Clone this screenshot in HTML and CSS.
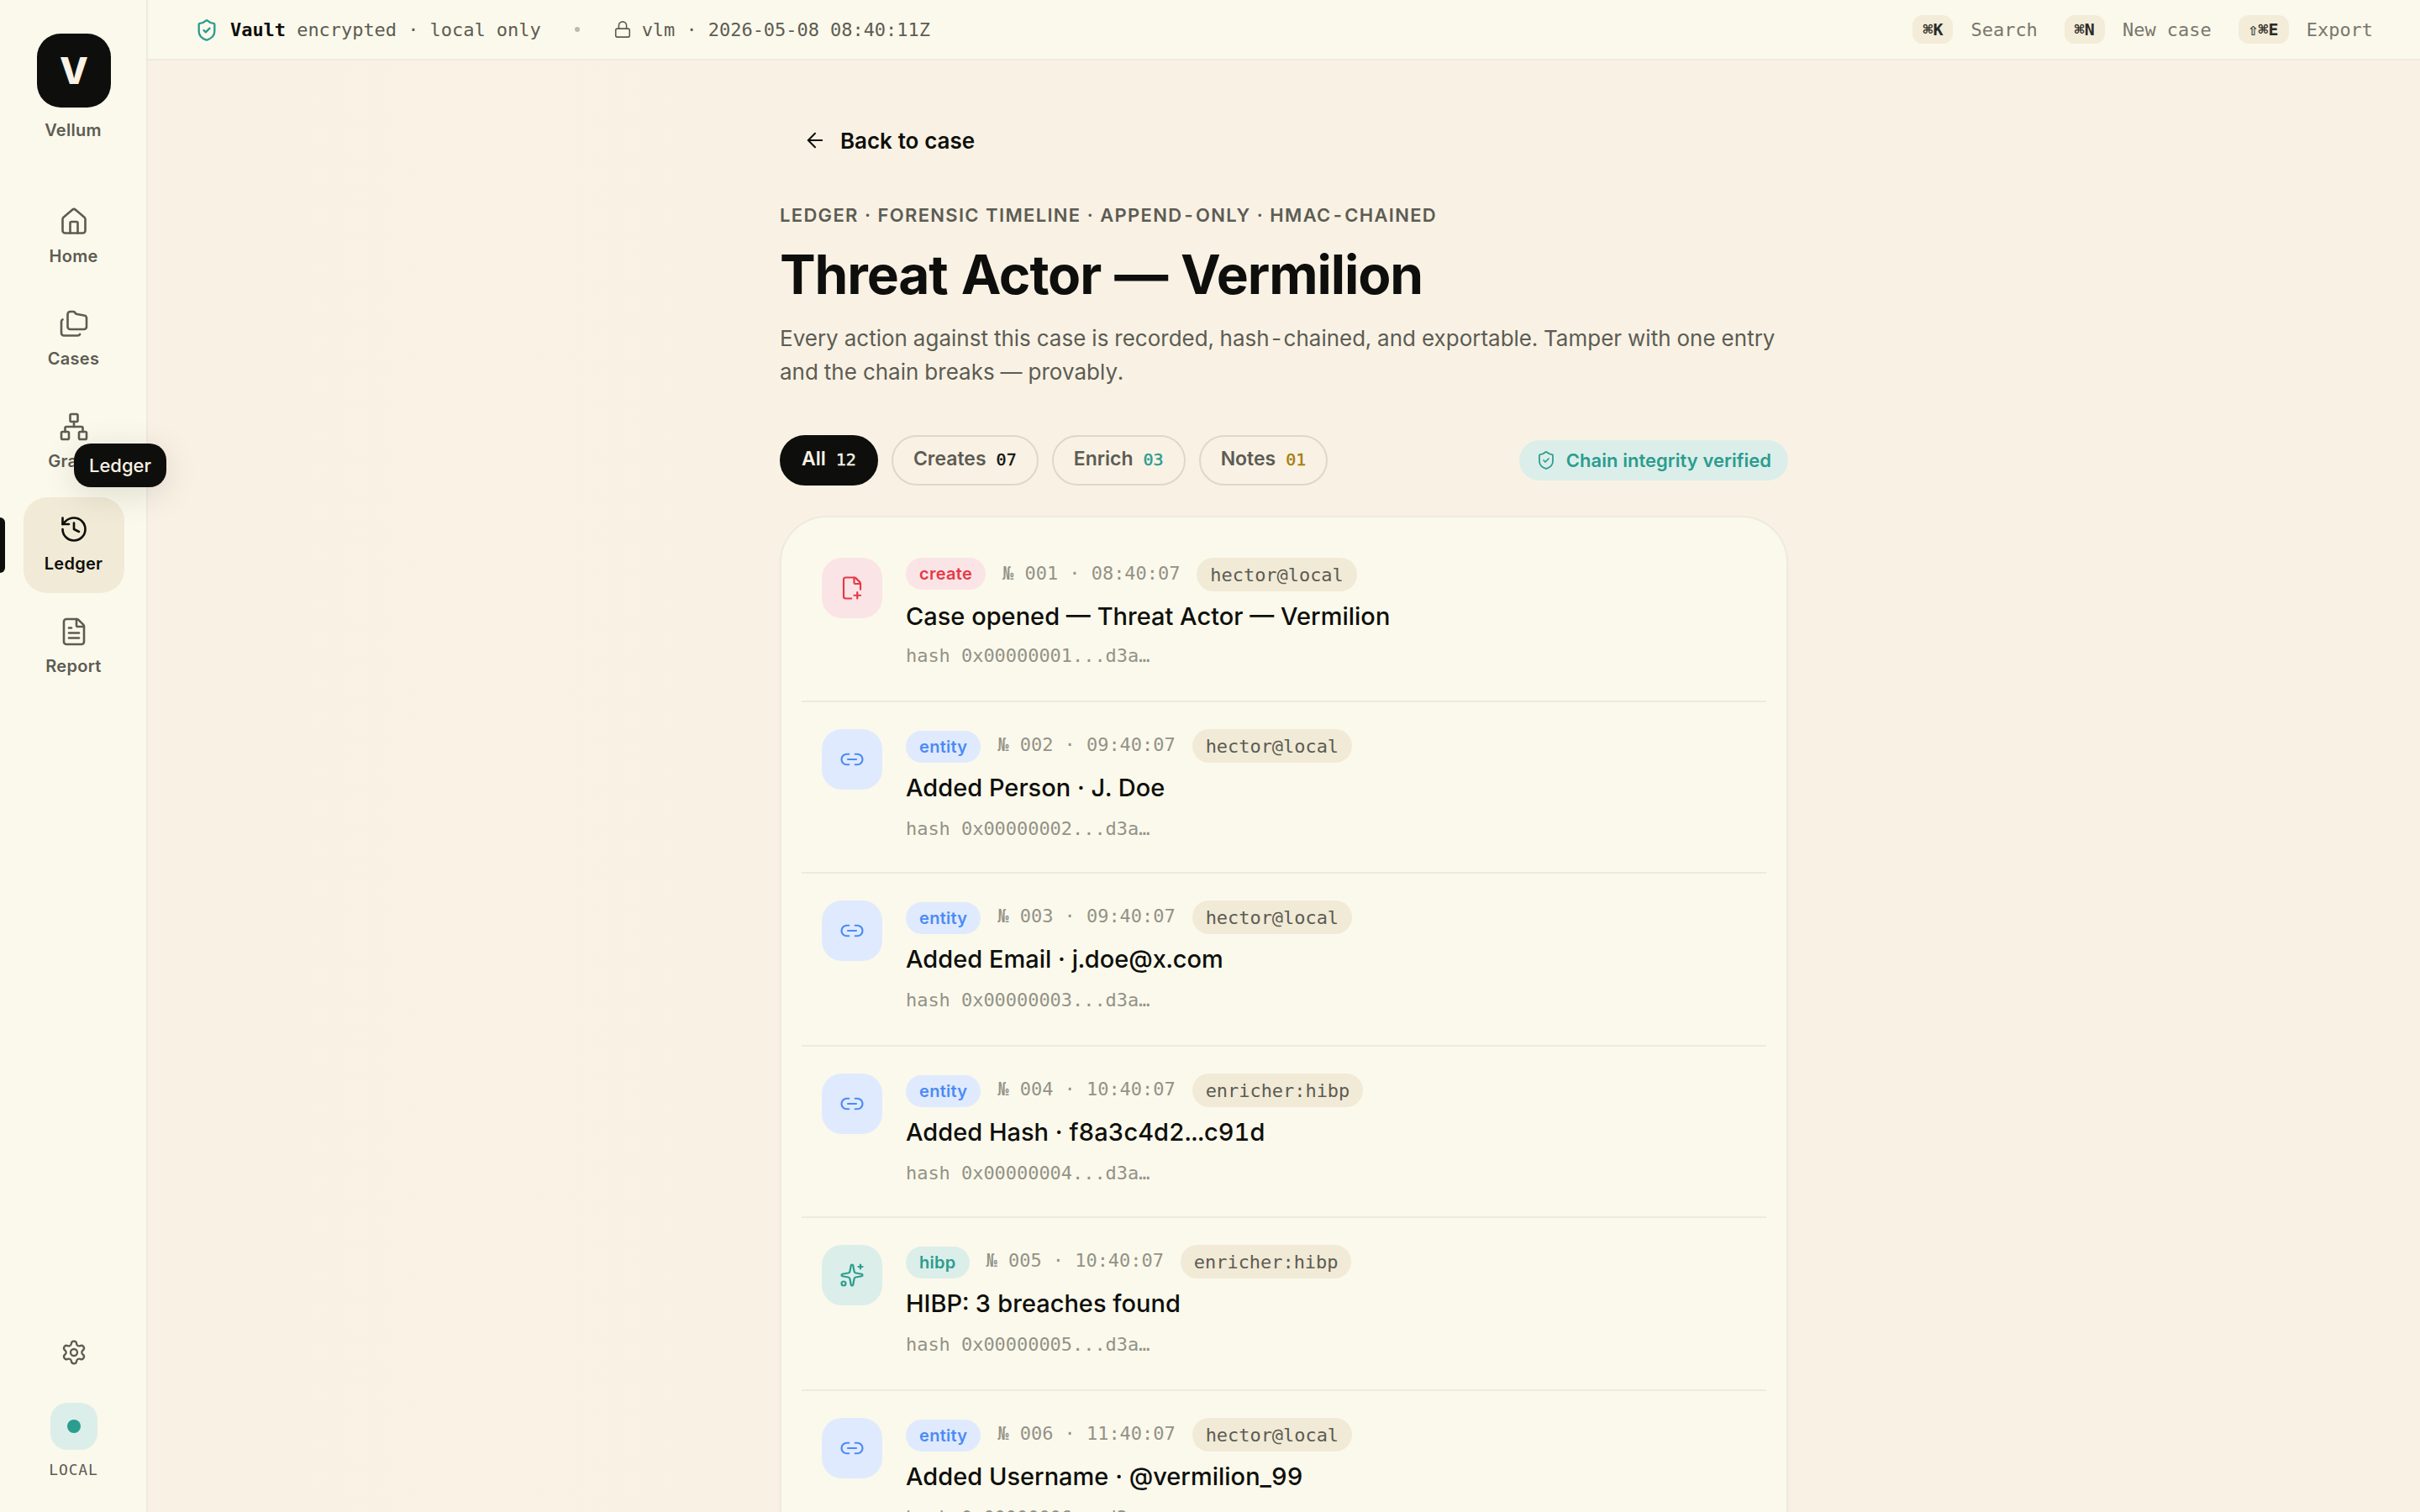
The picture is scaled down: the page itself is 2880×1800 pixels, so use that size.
FILE: index.html
```html
<!DOCTYPE html>
<html lang="en">
<head>
<meta charset="utf-8">
<title>Vellum — Ledger</title>
<link rel="stylesheet" href="styles.css">
</head>
<body>
<svg class="sprite" aria-hidden="true">
  <symbol id="i-home" viewBox="0 0 24 24"><path d="M15 21v-8a1 1 0 0 0-1-1h-4a1 1 0 0 0-1 1v8"/><path d="M3 10a2 2 0 0 1 .709-1.528l7-6a2 2 0 0 1 2.582 0l7 6A2 2 0 0 1 21 10v9a2 2 0 0 1-2 2H5a2 2 0 0 1-2-2z"/></symbol>
  <symbol id="i-folders" viewBox="0 0 24 24"><path d="M20 5a2 2 0 0 1 2 2v7a2 2 0 0 1-2 2H9a2 2 0 0 1-2-2V4a2 2 0 0 1 2-2h2.5a1.5 1.5 0 0 1 1.2.6l.6.8a1.5 1.5 0 0 0 1.2.6z"/><path d="M3 8.268a2 2 0 0 0-1 1.738V19a2 2 0 0 0 2 2h11a2 2 0 0 0 1.732-1"/></symbol>
  <symbol id="i-network" viewBox="0 0 24 24"><rect x="16" y="16" width="6" height="6" rx="1"/><rect x="2" y="16" width="6" height="6" rx="1"/><rect x="9" y="2" width="6" height="6" rx="1"/><path d="M5 16v-3a1 1 0 0 1 1-1h12a1 1 0 0 1 1 1v3"/><path d="M12 12V8"/></symbol>
  <symbol id="i-history" viewBox="0 0 24 24"><path d="M3 12a9 9 0 1 0 9-9 9.75 9.75 0 0 0-6.74 2.74L3 8"/><path d="M3 3v5h5"/><path d="M12 7v5l4 2"/></symbol>
  <symbol id="i-file-text" viewBox="0 0 24 24"><path d="M6 22a2 2 0 0 1-2-2V4a2 2 0 0 1 2-2h8a2.4 2.4 0 0 1 1.704.706l3.588 3.588A2.4 2.4 0 0 1 20 8v12a2 2 0 0 1-2 2z"/><path d="M14 2v5a1 1 0 0 0 1 1h5"/><path d="M10 9H8"/><path d="M16 13H8"/><path d="M16 17H8"/></symbol>
  <symbol id="i-settings" viewBox="0 0 24 24"><path d="M9.671 4.136a2.34 2.34 0 0 1 4.659 0 2.34 2.34 0 0 0 3.319 1.915 2.34 2.34 0 0 1 2.33 4.033 2.34 2.34 0 0 0 0 3.831 2.34 2.34 0 0 1-2.33 4.033 2.34 2.34 0 0 0-3.319 1.915 2.34 2.34 0 0 1-4.659 0 2.34 2.34 0 0 0-3.32-1.915 2.34 2.34 0 0 1-2.33-4.033 2.34 2.34 0 0 0 0-3.831A2.34 2.34 0 0 1 6.35 6.051a2.34 2.34 0 0 0 3.319-1.915"/><circle cx="12" cy="12" r="3"/></symbol>
  <symbol id="i-shield" viewBox="0 0 24 24"><path d="M20 13c0 5-3.5 7.5-7.66 8.95a1 1 0 0 1-.67-.01C7.5 20.5 4 18 4 13V6a1 1 0 0 1 1-1c2 0 4.5-1.2 6.24-2.72a1.17 1.17 0 0 1 1.52 0C14.51 3.81 17 5 19 5a1 1 0 0 1 1 1z"/><path d="m9 12 2 2 4-4"/></symbol>
  <symbol id="i-lock" viewBox="0 0 24 24"><rect x="3" y="11" width="18" height="11" rx="2"/><path d="M7 11V7a5 5 0 0 1 10 0v4"/></symbol>
  <symbol id="i-arrow" viewBox="0 0 24 24"><path d="m12 19-7-7 7-7"/><path d="M19 12H5"/></symbol>
  <symbol id="i-file-plus" viewBox="0 0 24 24"><path d="M11.35 22H6a2 2 0 0 1-2-2V4a2 2 0 0 1 2-2h8a2.4 2.4 0 0 1 1.704.706l3.588 3.588A2.4 2.4 0 0 1 20 8v5.35"/><path d="M14 2v5a1 1 0 0 0 1 1h5"/><path d="M14 19h6"/><path d="M17 16v6"/></symbol>
  <symbol id="i-link" viewBox="0 0 24 24"><path d="M9 17H7A5 5 0 0 1 7 7h2"/><path d="M15 7h2a5 5 0 1 1 0 10h-2"/><path d="M8 12h8"/></symbol>
  <symbol id="i-sparkles" viewBox="0 0 24 24"><path d="M11.017 2.814a1 1 0 0 1 1.966 0l1.051 5.558a2 2 0 0 0 1.594 1.594l5.558 1.051a1 1 0 0 1 0 1.966l-5.558 1.051a2 2 0 0 0-1.594 1.594l-1.051 5.558a1 1 0 0 1-1.966 0l-1.051-5.558a2 2 0 0 0-1.594-1.594l-5.558-1.051a1 1 0 0 1 0-1.966l5.558-1.051a2 2 0 0 0 1.594-1.594z"/><path d="M20 2v4"/><path d="M22 4h-4"/><circle cx="4" cy="20" r="2"/></symbol>
</svg>

<div class="app">
  <aside class="sidebar">
    <div class="brand">
      <div class="logo">V</div>
      <span class="brand-name">Vellum</span>
    </div>
    <nav class="nav">
      <a class="nav-item"><svg class="icon"><use href="#i-home"/></svg><span class="label">Home</span></a>
      <a class="nav-item"><svg class="icon"><use href="#i-folders"/></svg><span class="label">Cases</span></a>
      <a class="nav-item"><svg class="icon"><use href="#i-network"/></svg><span class="label">Graph</span></a>
      <a class="nav-item active"><svg class="icon"><use href="#i-history"/></svg><span class="label">Ledger</span><span class="tooltip">Ledger</span></a>
      <a class="nav-item"><svg class="icon"><use href="#i-file-text"/></svg><span class="label">Report</span></a>
    </nav>
    <div class="sidebar-foot">
      <svg class="icon settings"><use href="#i-settings"/></svg>
      <div class="status"><span class="status-dot"></span></div>
      <span class="status-label">LOCAL</span>
    </div>
  </aside>

  <div class="workspace">
    <header class="topbar">
      <div class="vault">
        <svg class="icon shield"><use href="#i-shield"/></svg>
        <span><b>Vault</b> encrypted · local only</span>
      </div>
      <span class="sep"></span>
      <div class="session">
        <svg class="icon lock"><use href="#i-lock"/></svg>
        <span>vlm · 2026-05-08 08:40:11Z</span>
      </div>
      <div class="shortcuts">
        <div class="shortcut"><kbd>⌘K</kbd><span>Search</span></div>
        <div class="shortcut"><kbd>⌘N</kbd><span>New case</span></div>
        <div class="shortcut"><kbd>⇧⌘E</kbd><span>Export</span></div>
      </div>
    </header>

    <main class="page">
      <div class="column">
        <a class="back"><svg class="icon"><use href="#i-arrow"/></svg><span>Back to case</span></a>
        <div class="eyebrow">LEDGER · FORENSIC TIMELINE · APPEND-ONLY · HMAC-CHAINED</div>
        <h1 class="title">Threat Actor — Vermilion</h1>
        <p class="lede">Every action against this case is recorded, hash-chained, and exportable. Tamper with one entry<br>and the chain breaks — provably.</p>

        <div class="toolbar">
          <div class="filters">
            <button class="chip on">All <span class="count">12</span></button>
            <button class="chip">Creates <span class="count ink">07</span></button>
            <button class="chip">Enrich <span class="count teal">03</span></button>
            <button class="chip">Notes <span class="count gold">01</span></button>
          </div>
          <div class="verified"><svg class="icon"><use href="#i-shield"/></svg><span>Chain integrity verified</span></div>
        </div>

        <section class="ledger">
          <article class="entry">
            <div class="badge rose"><svg class="icon"><use href="#i-file-plus"/></svg></div>
            <div class="body">
              <div class="meta"><span class="tag rose">create</span><span class="stamp">№ 001 · 08:40:07</span><span class="actor">hector@local</span></div>
              <h2 class="name">Case opened — Threat Actor — Vermilion</h2>
              <div class="hash">hash 0x00000001...d3a…</div>
            </div>
          </article>
          <article class="entry">
            <div class="badge blue"><svg class="icon"><use href="#i-link"/></svg></div>
            <div class="body">
              <div class="meta"><span class="tag blue">entity</span><span class="stamp">№ 002 · 09:40:07</span><span class="actor">hector@local</span></div>
              <h2 class="name">Added Person · J. Doe</h2>
              <div class="hash">hash 0x00000002...d3a…</div>
            </div>
          </article>
          <article class="entry">
            <div class="badge blue"><svg class="icon"><use href="#i-link"/></svg></div>
            <div class="body">
              <div class="meta"><span class="tag blue">entity</span><span class="stamp">№ 003 · 09:40:07</span><span class="actor">hector@local</span></div>
              <h2 class="name">Added Email · j.doe@x.com</h2>
              <div class="hash">hash 0x00000003...d3a…</div>
            </div>
          </article>
          <article class="entry">
            <div class="badge blue"><svg class="icon"><use href="#i-link"/></svg></div>
            <div class="body">
              <div class="meta"><span class="tag blue">entity</span><span class="stamp">№ 004 · 10:40:07</span><span class="actor">enricher:hibp</span></div>
              <h2 class="name">Added Hash · f8a3c4d2...c91d</h2>
              <div class="hash">hash 0x00000004...d3a…</div>
            </div>
          </article>
          <article class="entry">
            <div class="badge mint"><svg class="icon"><use href="#i-sparkles"/></svg></div>
            <div class="body">
              <div class="meta"><span class="tag mint">hibp</span><span class="stamp">№ 005 · 10:40:07</span><span class="actor">enricher:hibp</span></div>
              <h2 class="name">HIBP: 3 breaches found</h2>
              <div class="hash">hash 0x00000005...d3a…</div>
            </div>
          </article>
          <article class="entry">
            <div class="badge blue"><svg class="icon"><use href="#i-link"/></svg></div>
            <div class="body">
              <div class="meta"><span class="tag blue">entity</span><span class="stamp">№ 006 · 11:40:07</span><span class="actor">hector@local</span></div>
              <h2 class="name">Added Username · @vermilion_99</h2>
              <div class="hash">hash 0x00000006...d3a…</div>
            </div>
          </article>
        </section>
      </div>
    </main>
  </div>
</div>
</body>
</html>
```
FILE: styles.css
```css
:root {
  --bg: #faf2e5;
  --surface: #fbf9eb;
  --sand: #f1ead6;
  --line: #edebde;
  --ink: #0e0f0c;
  --muted: #5c5c54;
  --faint: #939288;
  --teal: #2a9d8f;
  --mint: #dceeea;
  --sans: Inter, "Liberation Sans", sans-serif;
  --mono: "DejaVu Sans Mono", "Liberation Mono", monospace;
}

* { box-sizing: border-box; }

body {
  margin: 0;
  background: var(--bg);
  color: var(--ink);
  font-family: var(--sans);
  font-variant-numeric: tabular-nums;
  -webkit-font-smoothing: antialiased;
}

.sprite { display: none; }

.icon {
  display: block;
  flex: none;
  width: 36px;
  height: 36px;
  fill: none;
  stroke: currentColor;
  stroke-width: 1.75;
  stroke-linecap: round;
  stroke-linejoin: round;
}

.app { display: flex; height: 1800px; overflow: hidden; }

/* Sidebar */
.sidebar {
  display: flex;
  flex-direction: column;
  align-items: center;
  flex: none;
  width: 176px;
  padding: 40px 0 37px;
  background: var(--surface);
  border-right: 2px solid var(--line);
  color: var(--muted);
  position: relative;
  z-index: 2;
}

.brand {
  display: flex;
  flex-direction: column;
  align-items: center;
  gap: 12px;
  margin-left: 2px;
}

.logo {
  display: grid;
  place-items: center;
  width: 88px;
  height: 88px;
  border-radius: 28px;
  background: var(--ink);
  color: var(--bg);
  font-size: 44px;
  font-weight: 800;
  line-height: 1;
}

.brand-name {
  padding-right: 2px;
  font-size: 20px;
  font-weight: 600;
  line-height: 30px;
  letter-spacing: .3px;
}

.nav {
  display: flex;
  flex-direction: column;
  gap: 8px;
  margin: 56px 0 0 2px;
}

.nav-item {
  position: relative;
  display: flex;
  flex-direction: column;
  align-items: center;
  gap: 8px;
  width: 120px;
  height: 114px;
  padding: 20px 0;
  border-radius: 28px;
  font-size: 20px;
  font-weight: 600;
  line-height: 30px;
  letter-spacing: .3px;
}

.label { padding-right: 1px; }

.nav-item.active { background: var(--sand); color: var(--ink); }

.nav-item.active::before {
  content: "";
  position: absolute;
  left: -28px;
  top: 24px;
  width: 6px;
  height: 66px;
  border-radius: 0 6px 6px 0;
  background: var(--ink);
}

.tooltip {
  position: absolute;
  left: 60px;
  top: -64px;
  width: 110px;
  height: 52px;
  border-radius: 20px;
  background: var(--ink);
  color: var(--bg);
  box-shadow: 0 8px 40px rgba(14, 15, 12, .12);
  font-size: 22px;
  font-weight: 500;
  line-height: 52px;
  letter-spacing: 0;
  text-align: center;
}

.sidebar-foot {
  display: flex;
  flex-direction: column;
  align-items: center;
  margin: auto 0 0 2px;
}

.settings { width: 32px; height: 32px; margin-bottom: 44px; }

.status {
  display: grid;
  place-items: center;
  width: 56px;
  height: 56px;
  margin-bottom: 10px;
  border-radius: 20px;
  background: var(--mint);
}

.status-dot { width: 16px; height: 16px; border-radius: 50%; background: var(--teal); }

.status-label { padding-right: 1px; font: 18px/27px var(--mono); letter-spacing: .86px; }

/* Top bar */
.workspace { display: flex; flex-direction: column; flex: 1; min-width: 0; }

.topbar {
  display: flex;
  align-items: center;
  flex: none;
  height: 72px;
  padding: 0 56px;
  background: var(--surface);
  border-bottom: 2px solid var(--line);
  color: var(--muted);
  font: 22px/33px var(--mono);
  letter-spacing: -.045px;
  white-space: pre;
}

.topbar b { color: var(--ink); }

.vault { display: flex; align-items: center; gap: 14px; }
.shield { width: 28px; height: 28px; margin-top: 2px; color: var(--teal); stroke-width: 2; }
.sep { width: 6px; height: 6px; margin: 0 40px; border-radius: 50%; background: #bcbab0; }
.session { display: flex; align-items: center; gap: 12px; }
.lock { width: 22px; height: 22px; }

.shortcuts { display: flex; gap: 32px; margin-left: auto; color: #78776e; }
.shortcut { display: flex; align-items: center; gap: 21.2px; }

kbd {
  height: 34px;
  padding: 0 12px;
  border-radius: 12px;
  background: #f3ecd9;
  color: #2b2b27;
  font: 600 20px/34px var(--mono);
  letter-spacing: -.04px;
}

/* Page */
.page {
  display: flex;
  justify-content: center;
  flex: 1;
  min-height: 0;
  background: linear-gradient(90deg, #faf1e5, #f9f2e4 30%);
}

.column { width: 1200px; padding-top: 67px; }

.back {
  display: flex;
  align-items: center;
  gap: 16px;
  height: 56px;
  padding-left: 28px;
  font-size: 26px;
  font-weight: 600;
  letter-spacing: -.06px;
}

.back .icon { width: 28px; height: 28px; }

.eyebrow {
  margin-top: 45px;
  color: var(--muted);
  font-size: 22px;
  font-weight: 600;
  line-height: 33px;
  letter-spacing: 1.32px;
  white-space: nowrap;
}

.title {
  margin: 19px 0 0;
  font-size: 64px;
  font-weight: 700;
  line-height: 70px;
  letter-spacing: -1.13px;
}

.lede {
  margin: 21px 0 0;
  color: var(--muted);
  font-size: 26px;
  line-height: 40px;
  white-space: nowrap;
}

.toolbar {
  display: flex;
  align-items: center;
  justify-content: space-between;
  margin: 55px 0 36px;
}

.filters { display: flex; gap: 16px; }

.chip {
  display: flex;
  align-items: baseline;
  justify-content: space-between;
  height: 60px;
  padding: 11px 24px 0;
  border: 2px solid #ded8c9;
  border-radius: 30px;
  background: transparent;
  color: var(--muted);
  font: 600 23px/30px var(--sans);
}

.chip.on { border-color: var(--ink); background: var(--ink); color: var(--bg); }

.count { margin-left: 12px; font: 500 20px/30px var(--mono); -webkit-text-stroke: .4px currentColor; }
.ink { color: var(--ink); }
.teal { color: var(--teal); }
.gold { color: #a67c0d; }

.verified {
  display: flex;
  align-items: center;
  gap: 12px;
  height: 48px;
  padding: 0 20px;
  border-radius: 24px;
  background: var(--mint);
  color: var(--teal);
  font-size: 22px;
  font-weight: 600;
}

.verified .icon { width: 24px; height: 24px; }

/* Ledger card */
.ledger {
  padding: 16px 24px;
  border: 2px solid var(--line);
  border-radius: 56px;
  background: var(--surface);
  box-shadow: 0 2px 4px rgba(14, 15, 12, .03);
}

.entry {
  display: flex;
  gap: 28px;
  height: 204px;
  padding: 32px 24px;
  border-bottom: 2px solid var(--line);
}

.entry:nth-child(2n + 3) { height: 206px; }

.badge {
  display: grid;
  place-items: center;
  flex: none;
  width: 72px;
  height: 72px;
  border-radius: 24px;
}

.badge .icon { width: 30px; height: 30px; }

.rose { background: #fbe4e6; color: #e63946; }
.blue { background: #e0eafe; color: #4b8bf5; }
.mint { background: var(--mint); color: var(--teal); }

.meta { display: flex; align-items: flex-start; gap: 20px; height: 41px; }

.tag {
  height: 38px;
  padding: 0 16px;
  border-radius: 19px;
  font-size: 20px;
  font-weight: 600;
  line-height: 38px;
  letter-spacing: .3px;
}

.stamp, .actor, .hash {
  font: 22px/33px var(--mono);
  letter-spacing: -.045px;
  white-space: pre;
}

.stamp, .hash { color: var(--faint); }

.stamp { padding-top: 2px; }

.actor {
  padding: 4px 16px 3px;
  border-radius: 20px;
  background: var(--sand);
  color: var(--muted);
}

.name {
  margin: 6px 0 0;
  font-size: 29px;
  font-weight: 500;
  line-height: 45px;
}

.hash { margin-top: 8px; }

.entry + .entry .tag { margin-top: 2px; }
.entry + .entry .hash { margin-top: 10px; }
```
